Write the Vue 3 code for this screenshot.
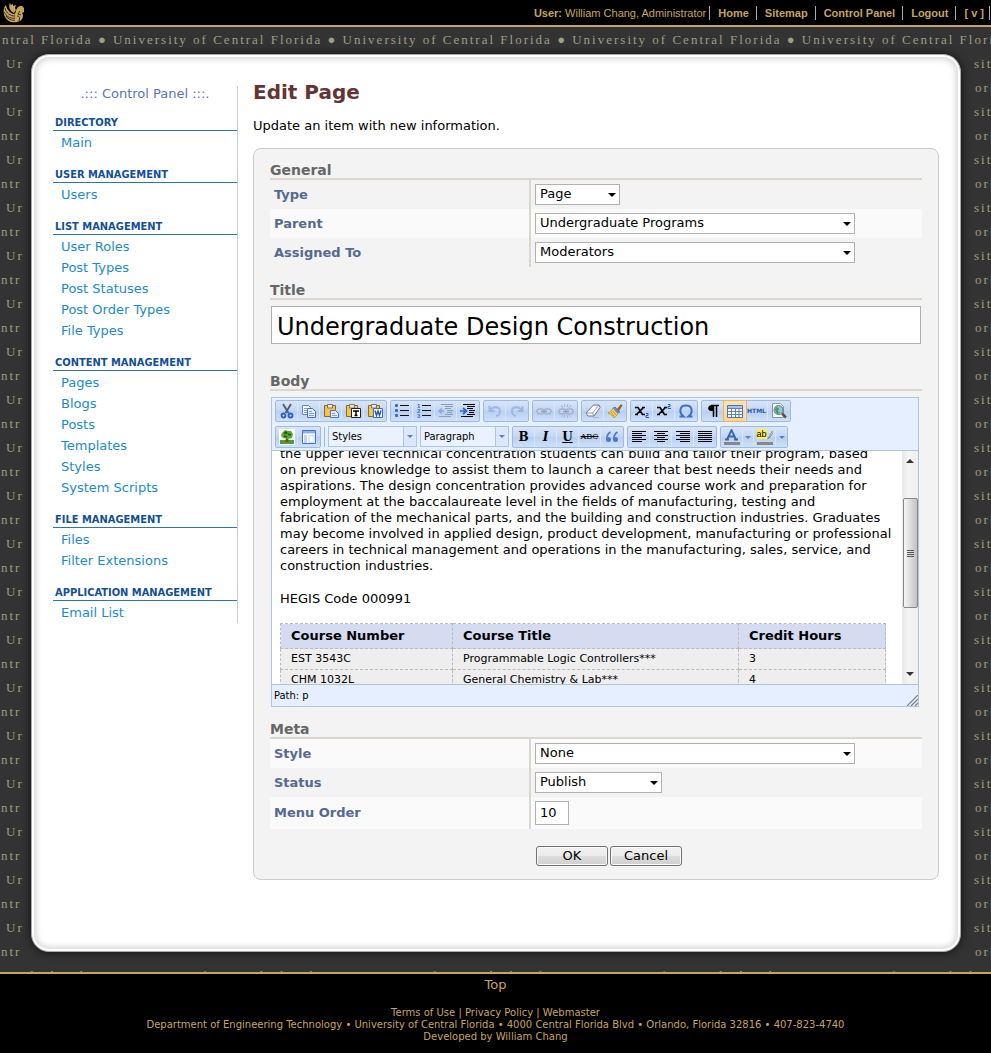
<script setup>
import { ref } from 'vue'

const userLinks = ['Home', 'Sitemap', 'Control Panel', 'Logout', '[ v ]']
const motto = 'ntral Florida ● ' + 'University of Central Florida ● '.repeat(7)
const rows = Array.from({ length: 38 }, (_, i) => i)

const menu = [
  { title: 'Directory', links: ['Main'] },
  { title: 'User Management', links: ['Users'] },
  { title: 'List Management', links: ['User Roles', 'Post Types', 'Post Statuses', 'Post Order Types', 'File Types'] },
  { title: 'Content Management', links: ['Pages', 'Blogs', 'Posts', 'Templates', 'Styles', 'System Scripts'] },
  { title: 'File Management', links: ['Files', 'Filter Extensions'] },
  { title: 'Application Management', links: ['Email List'] },
]

const title = ref('Undergraduate Design Construction')
const order = ref('10')

const line = (y, x1, x2, c) => `<path d="M${x1} ${y + 0.5}H${x2}" stroke="${c}"/>`
const lines = (list, c) => list.map(([y, a, b]) => line(y, a, b, c)).join('')
const board = '<path d="M1.500 2.500h11v11h-11z" fill="#f2c44a" stroke="#8c6a1c"/><path d="M4.500 1.500h5V5h-5z" fill="#e8e8e8" stroke="#777"/>'
const digits = (t, y) => `<text x="1" y="${y}" font-size="6" font-weight="bold" fill="#3b68b5" font-family="Liberation Sans, sans-serif">${t}</text>`
const sheet = '<path d="M1.500 2.500h6l2 2v7h-8z" fill="#fff" stroke="#5f88c9"/><path d="M6.500 5.500h5l3 3v6h-8z" fill="#e8f0ff" stroke="#3f6fc0"/><path d="M8 8.500h3M8 10.500h5M8 12.500h5M3 5.500h3M3 7.500h3M3 9.500h3" stroke="#7ba0dc"/>'
const textLines = [[3, 7, 15], [5, 7, 13], [7, 9, 15], [9, 9, 14], [11, 7, 15], [13, 1, 13]]
const link = '<rect x="1" y="6" width="7" height="5" rx="2.500" fill="none" stroke="#a5b3cc" stroke-width="1.500"/><rect x="8" y="6" width="7" height="5" rx="2.500" fill="none" stroke="#a5b3cc" stroke-width="1.500"/><path d="M5 8.500h6" stroke="#8fa2c4" stroke-width="1.500"/>'

const icons = {
  Cut: '<path d="M4 1l5.500 9M12 1L6.500 10" stroke="#4d5a70" stroke-width="1.800"/><circle cx="4.500" cy="12.500" r="2" fill="none" stroke="#2f62bd" stroke-width="1.800"/><circle cx="11.500" cy="12.500" r="2" fill="none" stroke="#2f62bd" stroke-width="1.800"/>',
  Copy: sheet,
  Paste: board + '<path d="M7.500 7.500h5l3 3v4h-8z" fill="#dfe9fa" stroke="#5675a8"/><path d="M9 10.500h3M9 12.500h5" stroke="#86a3d3"/>',
  'Paste as text': board + '<path d="M6.500 5.500h9v9h-9z" fill="#fff" stroke="#222"/><path d="M8 8h6M11 8v5M9.500 12.500h3" stroke="#000" stroke-width="1.500"/>',
  'Paste from Word': board + '<path d="M6.500 5.500h9v9h-9z" fill="#fff" stroke="#3d6cc0"/><path d="M8 7.500l1.500 5L11 8l1.500 4.500L14 7.500" fill="none" stroke="#2458b5" stroke-width="1.400"/>',
  'Bulleted list': '<g fill="#3b68b5"><rect x="1" y="1" width="3" height="3" rx="1"/><rect x="1" y="6" width="3" height="3" rx="1"/><rect x="1" y="11" width="3" height="3" rx="1"/></g>' + lines([[2, 6, 15], [7, 6, 15], [12, 6, 15]], '#111'),
  'Numbered list': digits('1', 5) + digits('2', 10) + digits('3', 15) + lines([[2, 6, 15], [7, 6, 15], [12, 6, 15]], '#111'),
  Outdent: lines([[1, 3, 15], ...textLines], '#8f9db5') + '<path d="M6 8H2M4 5.500L1 8l3 2.500" fill="none" stroke="#8da9dc" stroke-width="1.500"/>',
  Indent: lines([[1, 3, 15], ...textLines], '#000') + '<path d="M0 8h5M3 5l3.500 3L3 11" fill="none" stroke="#2c64c8" stroke-width="1.700"/>',
  Undo: '<path d="M2.500 3v5h5M3 8c2-5 10-5 10 0 0 3-2 5-4 5" fill="none" stroke="#9db7e2" stroke-width="2"/>',
  Redo: '<path d="M13.500 3v5h-5M13 8c-2-5-10-5-10 0 0 3 2 5 4 5" fill="none" stroke="#9db7e2" stroke-width="2"/>',
  Link: link,
  Unlink: link + '<path d="M6 1l1 3M10 1L9 4M6 15l1-3M10 15l-1-3M3 2l2 3M13 2l-2 3M3 14l2-2M13 14l-2-2" stroke="#a5b3cc"/>',
  'Remove formatting': '<path d="M8.500 2h5.500l1 2.500-6 8.500H3l-2-3z" fill="#fff" stroke="#6b7488"/><path d="M1 10h6.500l1.500 3M7.500 10L14 2" fill="none" stroke="#8b93a5"/><path d="M8 14.500h6" stroke="#aab4c8"/>',
  'Clean up code': '<path d="M10 6l4-5 1.500 1.500L12 8z" fill="#936330"/><path d="M8 4l5 5-2 1-5-5z" fill="#6b86b9" stroke="#455f91" stroke-width=".6"/><path d="M6 5l5 6-4 4c-1-2-3-4-6-5 2-1 4-2 5-5z" fill="#f3d35e" stroke="#b98c28" stroke-width=".8"/><path d="M4 9l3 4M6 8l3 4" stroke="#c99c34"/>',
  Subscript: '<path d="M1 4.500h3l4.500 7H11M9.500 4.500L2.500 11.500M1 11.500h3M8 4.500h3" stroke="#000" stroke-width="1.600" fill="none"/><path d="M12 10.500h2v2h-2v2h3" stroke="#2458b5" fill="none"/>',
  Superscript: '<path d="M1 4.500h3l4.500 7H11M9.500 4.500L2.500 11.500M1 11.500h3M8 4.500h3" stroke="#000" stroke-width="1.600" fill="none"/><path d="M12 1.500h2v2h-2v2h3" stroke="#2458b5" fill="none"/>',
  'Special character': '<path d="M1.500 13.500h4C1 10 1 2.500 8 2.500s7 7.500 2.500 11h4" fill="none" stroke="#3f6fc0" stroke-width="2"/>',
  'Show blocks': '<path d="M8 2h-1c-5 0-5 6-1 6h2z" fill="#000"/><path d="M8.500 2v12M11.500 2v12M6 2.500h8" stroke="#000" stroke-width="1.500"/>',
  'Toggle guidelines': '<path d="M.5 2.500h15v12H.5z" fill="#fff" stroke="#4a73ba"/><path d="M1 3h14v2H1z" fill="#a9c2ec"/><path d="M1 5.500h14M1 8.500h14M1 11.500h14M4.500 5v9M8.500 5v9M12 5v9" stroke="#5b7fbf"/>',
  Preview: '<path d="M1.500.5h8l3 3v11h-11z" fill="#fff" stroke="#8294b5"/><circle cx="7.500" cy="7" r="4.500" fill="#8fcbd0" stroke="#56758d"/><path d="M5 4l3 1-1 3 2 2-3 1-2-4z" fill="#469d59"/><path d="M11 10.500l4 4" stroke="#704b2b" stroke-width="2.500"/>',
  'Insert image': '<path d="M.5.5h15v15H.5z" fill="#fff" stroke="#fff"/><path d="M1 11h14v4H1z" fill="#4f9d32"/><path d="M7 9h2l1 4H6z" fill="#7c4f22"/><path d="M3 4l3-3 3 1 3 0 2 3-1 4-4 1-5-1-2-2z" fill="#57a72f"/><path d="M5 4l2-1 1 2M9 5l3 1M5 7l3 1" stroke="#235f15" stroke-width="1.500"/>',
  'Page template': '<path d="M1.500 1.500h13v13h-13z" fill="#fff" stroke="#3f74c9"/><path d="M2 2h12v2.500H2z" fill="#8eb2ee"/><path d="M3 6h3v8H3z" fill="#bdd3f7"/><path d="M8 6.500h5v7H8z" fill="#f6f9ff" stroke="#c6d8f5"/>',
  Blockquote: '<g fill="#4c79c5"><circle cx="4.500" cy="10.500" r="2.500"/><circle cx="11.500" cy="10.500" r="2.500"/></g><path d="M2.800 11C2.500 7 4 4.500 6.500 3M9.800 11C9.500 7 11 4.500 13.500 3" fill="none" stroke="#4c79c5" stroke-width="1.600"/>',
  'Align left': lines([[2, 1, 15], [4, 1, 11], [6, 1, 15], [8, 1, 11], [10, 1, 15], [12, 1, 11]], '#000'),
  'Align center': lines([[2, 1, 15], [4, 4, 12], [6, 1, 15], [8, 4, 12], [10, 1, 15], [12, 4, 12]], '#000'),
  'Align right': lines([[2, 1, 15], [4, 5, 15], [6, 1, 15], [8, 5, 15], [10, 1, 15], [12, 5, 15]], '#000'),
  Justify: lines([[2, 1, 15], [4, 1, 15], [6, 1, 15], [8, 1, 15], [10, 1, 15], [12, 1, 15]], '#000'),
  'Text color': '<path d="M3 10.500L7.500 1 12 10.500M5 7.500h5M1 10.500h4M10 10.500h4" fill="none" stroke="#3a64ad" stroke-width="1.800"/><path d="M0 13h16v3H0z" fill="#888"/>',
}

const row1 = [
  ['Cut', 'Copy', 'Paste', 'Paste as text', 'Paste from Word'],
  ['Bulleted list', 'Numbered list', 'Outdent', 'Indent'],
  ['Undo', 'Redo'],
  ['Link', 'Unlink'],
  ['Remove formatting', 'Clean up code'],
  ['Subscript', 'Superscript', 'Special character'],
  ['Show blocks', 'Toggle guidelines', 'HTML', 'Preview'],
]
const aligns = ['Align left', 'Align center', 'Align right', 'Justify']
const courses = [
  ['EST 3543C', 'Programmable Logic Controllers***', '3'],
  ['CHM 1032L', 'General Chemistry & Lab***', '4'],
]
</script>

<template>
  <div class="page">
    <header class="top">
      <svg class="logo" viewBox="0 0 22 22" aria-label="Pegasus">
        <path d="M3 3C0 6 0 11 2 15c3 5 8 6 12 5 4-1 6-3 6-7l-1-2 2-1V6l-2-2-2 0-2 1-2 3 0 2-2 2C7 11 4 8 3 3z" fill="#c5a55f" />
        <path d="M7 1c-2 4 0 8 4 10l2-3-1-2 1-3-3 1 0-2-2 1z" fill="#c5a55f" />
        <path d="M2 6c1 5 5 8 10 8M1 10c2 4 6 7 11 6M3 14c2 3 6 5 9 4M5 3c0 5 3 8 7 9M17 9l-2 3 3 1M14 14c3 0 3 2 2 5" fill="none" stroke="#000" stroke-width=".7" />
      </svg>
      <nav class="user">
        <span class="who"><b>User:</b> William Chang, Administrator</span>
        <a v-for="l in userLinks" :key="l" href="#">{{ l }}</a>
      </nav>
    </header>

    <div class="stage">
      <div class="band" aria-hidden="true"><span>{{ motto }}</span></div>
      <div class="middle">
        <div class="strip" aria-hidden="true">
          <div class="rows left"><span v-for="r in rows" :key="r">{{ r % 2 ? 'ntr' : 'Ur' }}</span></div>
        </div>
        <div class="card">
          <aside class="side">
            <p class="side-title">.::: Control Panel :::.</p>
            <section v-for="g in menu" :key="g.title">
              <h2>{{ g.title }}</h2>
              <a v-for="l in g.links" :key="l" href="#">{{ l }}</a>
            </section>
          </aside>

          <main class="main">
            <h1>Edit Page</h1>
            <p class="lead">Update an item with new information.</p>
            <form class="form" @submit.prevent>
              <h3>General</h3>
              <div class="field">
                <label for="type">Type</label>
                <div class="cell"><span class="pick tiny"><select id="type"><option>Page</option></select></span></div>
              </div>
              <div class="field light">
                <label for="parent">Parent</label>
                <div class="cell"><span class="pick wide"><select id="parent"><option>Undergraduate Programs</option></select></span></div>
              </div>
              <div class="field">
                <label for="assigned">Assigned To</label>
                <div class="cell"><span class="pick wide"><select id="assigned"><option>Moderators</option></select></span></div>
              </div>

              <h3 class="spaced"><label for="title">Title</label></h3>
              <input id="title" v-model="title" class="title" type="text">

              <h3 class="body-head">Body</h3>
              <div class="editor">
                <div class="bar">
                  <div v-for="(g, i) in row1" :key="i" class="group">
                    <button v-for="b in g" :key="b" type="button" :aria-label="b" :class="{ on: b === 'Toggle guidelines' }">
                      <span v-if="b === 'HTML'" class="html">HTML</span>
                      <svg v-else viewBox="0 0 16 16" v-html="icons[b]" />
                    </button>
                  </div>
                </div>
                <div class="bar">
                  <div class="group">
                    <button v-for="b in ['Insert image', 'Page template']" :key="b" type="button" :aria-label="b"><svg viewBox="0 0 16 16" v-html="icons[b]" /></button>
                  </div>
                  <i class="sep" />
                  <span class="drop"><select aria-label="Styles"><option>Styles</option></select></span>
                  <span class="drop"><select aria-label="Format"><option>Paragraph</option></select></span>
                  <div class="group">
                    <button type="button" class="glyph" aria-label="Bold"><b>B</b></button>
                    <button type="button" class="glyph" aria-label="Italic"><em>I</em></button>
                    <button type="button" class="glyph" aria-label="Underline"><u>U</u></button>
                    <button type="button" class="glyph" aria-label="Strikethrough"><s>ABC</s></button>
                    <button type="button" aria-label="Blockquote"><svg viewBox="0 0 16 16" v-html="icons.Blockquote" /></button>
                  </div>
                  <div class="group">
                    <button v-for="b in aligns" :key="b" type="button" :aria-label="b"><svg viewBox="0 0 16 16" v-html="icons[b]" /></button>
                  </div>
                  <div class="group">
                    <button type="button" aria-label="Text color"><svg viewBox="0 0 16 16" v-html="icons['Text color']" /></button>
                    <button type="button" class="more" aria-label="More text colors"><i /></button>
                    <button type="button" aria-label="Highlight color">
                      <span class="mark">
                        <span>ab</span>
                        <svg viewBox="0 0 8 12"><path d="M7 1L3 8l-2 3 3-2 4-6z" fill="#f5f5f5" stroke="#555" stroke-width=".8" /></svg>
                      </span>
                    </button>
                    <button type="button" class="more" aria-label="More highlight colors"><i /></button>
                  </div>
                </div>
                <div class="view">
                  <div class="doc">
                    <p>
                      the upper level technical concentration students can build and tailor their program, based<br>
                      on previous knowledge to assist them to launch a career that best needs their needs and<br>
                      aspirations. The design concentration provides advanced course work and preparation for<br>
                      employment at the baccalaureate level in the fields of manufacturing, testing and<br>
                      fabrication of the mechanical parts, and the building and construction industries. Graduates<br>
                      may become involved in applied design, product development, manufacturing or professional<br>
                      careers in technical management and operations in the manufacturing, sales, service, and<br>
                      construction industries.
                    </p>
                    <p>HEGIS Code 000991</p>
                    <table>
                      <thead><tr><th>Course Number</th><th>Course Title</th><th>Credit Hours</th></tr></thead>
                      <tbody><tr v-for="c in courses" :key="c[0]"><td v-for="v in c" :key="v">{{ v }}</td></tr></tbody>
                    </table>
                  </div>
                  <div class="scroll">
                    <i class="up" />
                    <div class="thumb"><i /><i /><i /><i /></div>
                    <i class="down" />
                  </div>
                </div>
                <div class="status">
                  <span>Path: p</span>
                  <svg viewBox="0 0 11 11"><path d="M0 11L11 0M4 11l7-7M8 11l3-3" stroke="#777" stroke-width="1.200" /></svg>
                </div>
              </div>

              <h3 class="meta">Meta</h3>
              <div class="field light">
                <label for="style">Style</label>
                <div class="cell"><span class="pick wide"><select id="style"><option>None</option></select></span></div>
              </div>
              <div class="field">
                <label for="status">Status</label>
                <div class="cell"><span class="pick mid"><select id="status"><option>Publish</option></select></span></div>
              </div>
              <div class="field light">
                <label for="order">Menu Order</label>
                <div class="cell"><input id="order" v-model="order" class="order" type="text"></div>
              </div>
              <div class="actions">
                <button type="submit">OK</button>
                <button type="button">Cancel</button>
              </div>
            </form>
          </main>
        </div>
        <div class="strip" aria-hidden="true">
          <div class="rows right"><span v-for="r in rows" :key="r">{{ r % 2 ? 'ori' : 'sit' }}</span></div>
        </div>
      </div>
      <div class="band low" aria-hidden="true"><span>{{ motto }}</span></div>
    </div>

    <footer class="foot">
      <a class="to-top" href="#">Top</a>
      <p><a href="#">Terms of Use</a> | <a href="#">Privacy Policy</a> | <a href="#">Webmaster</a></p>
      <p>Department of Engineering Technology • University of Central Florida • 4000 Central Florida Blvd • Orlando, Florida 32816 • 407-823-4740</p>
      <p>Developed by <a href="#">William Chang</a></p>
    </footer>
  </div>
</template>

<style>
body { background: #000; }
</style>

<style scoped>
* { box-sizing: border-box; }
h1, h2, h3, p { margin: 0; }
a { text-decoration: none; }
.page {
  min-height: 100vh;
  display: flex;
  flex-direction: column;
  background: #000;
  font: 13px/16px Verdana, "DejaVu Sans", sans-serif;
  color: #000;
}
.top {
  display: flex;
  justify-content: space-between;
  align-items: center;
  height: 27px;
  overflow: hidden;
  border-bottom: 2px solid #c5a55f;
}
.logo { width: 22px; height: 22px; margin-left: 3px; }
.user {
  display: flex;
  font: 11px/14px "Liberation Sans", Arial, sans-serif;
}
.user > * { padding: 0 7px 0 8px; border-right: 1px solid #aaa; color: #c5a55f; white-space: nowrap; }
.user .who { padding-right: 3px; }
.user a { font-weight: bold; }
.user a:last-child { padding-right: 5px; margin-right: 1px; }

.stage { background: #333; border-bottom: 2px solid #c5a55f; }
.band, .rows { font: 13px/24px "Liberation Serif", serif; letter-spacing: 2px; color: #9c9f80; }
.band { height: 27px; padding: 1px 0 0 2px; overflow: hidden; white-space: nowrap; }
.band.low { height: 20px; padding-top: 12px; }
.middle { display: flex; }
.strip { flex: 0 0 31px; position: relative; overflow: hidden; margin-bottom: -8px; }
.strip:last-child { flex-basis: 30px; }
.rows { position: absolute; top: -2px; left: 1px; }
.rows.right { left: 13px; }
.rows span { display: block; height: 24px; }
.rows.left span:nth-child(odd) { padding-left: 5px; }
.rows.right span:nth-child(even) { padding-left: 1px; }
.card {
  position: relative;
  z-index: 1;
  flex: 1;
  min-width: 0;
  min-height: 898px;
  display: flex;
  align-items: flex-start;
  padding: 31px 21px 70px;
  border: 1px solid #aaa;
  border-radius: 18px;
  background: #fff;
  box-shadow: 0 0 8px #111, inset 0 0 0 2px #fff, inset 0 0 6px 4px #d4d4d4;
}

.side { flex: 0 0 185px; border-right: 1px solid #ccc; }
.side-title { text-align: center; color: #5577b8; padding-bottom: 12px; }
.side section + section { margin-top: 13px; }
.side h2 {
  padding: 2px 0 0 2px;
  margin-bottom: 1px;
  border-bottom: 1px solid #2e75a5;
  font: bold 11px/14px Tahoma, "DejaVu Sans Condensed", sans-serif;
  text-transform: uppercase;
  color: #114f96;
}
.side a { display: block; padding-left: 8px; line-height: 21px; color: #1b8bcb; }

.main { flex: 1; min-width: 0; margin-left: 15px; }
h1 { font-size: 20px; line-height: 24px; margin-top: -6px; color: #633; }
.lead { margin-top: 14px; }
.form {
  margin-top: 14px;
  padding: 13px 16px;
  border: 1px solid #ccc;
  border-radius: 8px;
  background: #f3f3f3;
}
h3 { font-size: 14px; line-height: 16px; border-bottom: 2px solid #dad7d0; color: #666; }
h3.spaced { margin-top: 15px; }
h3.body-head { margin-top: 29px; }
h3.meta { margin-top: 14px; }
.field { display: flex; align-items: stretch; }
.field.light { background: #fafafa; }
.field label {
  flex: 0 0 261px;
  display: flex;
  align-items: center;
  padding-left: 4px;
  border-right: 2px solid #dad7d0;
  font-weight: bold;
  color: #566a90;
}
.cell { flex: 1; padding: 4px; }
select, input, button { font: inherit; color: inherit; margin: 0; }
.pick { position: relative; display: block; height: 21px; }
.pick.wide { width: 320px; }
.pick.tiny { width: 85px; }
.pick.mid { width: 127px; }
.pick select {
  display: block;
  width: 100%;
  height: 21px;
  padding: 0 18px 2px 4px;
  border: 1px solid #b0b0b0;
  border-radius: 0;
  background: #fff;
  appearance: none;
}
.pick::after {
  content: "";
  position: absolute;
  right: 4px;
  top: 9px;
  border: 4px solid transparent;
  border-top-color: #000;
  border-bottom: 0;
  pointer-events: none;
}
.title {
  display: block;
  width: calc(100% - 2px);
  height: 38px;
  margin: 6px 1px 0;
  padding: 3px 5px 0;
  border: 1px solid #b0b0b0;
  background: #fff;
  font-size: 24px;
}
.order { display: block; width: 34px; height: 24px; padding: 0 4px 1px; border: 1px solid #b0b0b0; background: #fff; }

.editor { margin: 6px 3px 0 1px; border: 1px solid #abc6dd; background: #e5efff; }
.bar { display: flex; gap: 3px; height: 26px; padding: 2px 3px; }
.group { display: flex; height: 22px; border: 1px solid #9ebbe0; border-radius: 2px; background: linear-gradient(#d8e5f8, #c2d6f3 50%, #b8cff0 50%, #cfe0f8); }
.group button { display: flex; align-items: center; justify-content: center; width: 22px; height: 20px; padding: 0; border: 0; border-right: 1px solid #d8e6fa; background: none; }
.group button:last-child { border-right: 0; }
.group svg { width: 16px; height: 16px; }
.group .on { background: linear-gradient(#ffe4ae, #ffd591); box-shadow: 0 0 0 1px #e8b568; }
.html { font: bold 6px/10px "DejaVu Sans", sans-serif; color: #2458b5; }
.group .glyph { font-family: "DejaVu Serif", serif; font-size: 12px; }
.glyph s { font-size: 8px; }
.glyph em, .glyph u { font-weight: bold; }
.group .more { width: 11px; }
.more i, .drop::after { border: 3px solid transparent; border-top-color: #5c80b8; border-bottom: 0; }
.mark { display: flex; width: 16px; height: 16px; border-bottom: 3px solid #888; }
.mark span { height: 10px; background: #ffee50; font: 9px/10px "Liberation Sans", sans-serif; }
.mark svg { width: 6px; height: 12px; }
.sep { width: 1px; height: 20px; margin: 1px 0; background: #9ebbe0; }
.drop { position: relative; width: 89px; height: 21px; }
.drop select { width: 89px; height: 21px; padding: 0 18px 0 3px; border: 1px solid #abc6dd; border-radius: 0; background: #eaf2ff; appearance: none; font: 11px/16px Tahoma, "DejaVu Sans Condensed", sans-serif; }
.drop::before { content: ""; position: absolute; right: 1px; top: 1px; width: 12px; height: 19px; border-left: 1px solid #abc6dd; background: #dce8fa; pointer-events: none; }
.drop::after { content: ""; position: absolute; right: 4px; top: 9px; pointer-events: none; }

.view { display: flex; height: 235px; border-top: 1px solid #abc6dd; border-bottom: 1px solid #abc6dd; background: #fff; overflow: hidden; }
.doc { flex: 1; display: flex; flex-direction: column; min-width: 0; padding: 0 16px 0 8px; }
.doc p { margin: -5px 0 22px; white-space: nowrap; }
.doc p + p { margin-bottom: 16px; }
table { width: 100%; border-collapse: collapse; table-layout: fixed; }
th, td { padding: 0 10px; border: 1px dashed #bbb; text-align: left; font-weight: normal; }
th { height: 25px; background: #d5dcf2; font-weight: bold; }
th:first-child { width: 172px; }
th:last-child { width: 147px; }
td { height: 21px; background: #eee; font-size: 11px; }
.scroll { flex: 0 0 16px; display: flex; flex-direction: column; align-items: center; background: linear-gradient(90deg, #e8e8e8, #f4f4f4 40%, #eee); }
.up, .down { border: 4px solid transparent; }
.up { border-top: 0; border-bottom-color: #333; margin: 8px 0 35px; }
.down { border-bottom: 0; border-top-color: #333; margin-top: 64px; }
.thumb { flex: 0 0 110px; display: flex; flex-direction: column; align-items: center; justify-content: center; gap: 1px; width: 15px; border: 1px solid #888; border-radius: 2px; background: linear-gradient(90deg, #f6f6f6, #ddd 50%, #c2c2c6); }
.thumb i { width: 7px; height: 1px; background: #555; }
.status { display: flex; justify-content: space-between; align-items: center; height: 21px; padding-left: 2px; font: 11px/16px Tahoma, "DejaVu Sans Condensed", sans-serif; }
.status svg { width: 11px; height: 11px; align-self: flex-end; }

.actions { display: flex; gap: 2px; margin: 17px 0 0 266px; }
.actions button { width: 72px; height: 20px; padding: 0; border: 1px solid #707070; border-radius: 3px; background: linear-gradient(#f2f2f2, #ebebeb 50%, #ddd 50%, #cfcfcf); box-shadow: inset 0 0 0 1px #fafafa; }

.foot { flex: 1; text-align: center; font-size: 10px; line-height: 12px; color: #c5a55f; }
.foot a { color: inherit; }
.foot .to-top { display: block; margin: 3px 0 14px; font-size: 13px; line-height: 16px; }
</style>
